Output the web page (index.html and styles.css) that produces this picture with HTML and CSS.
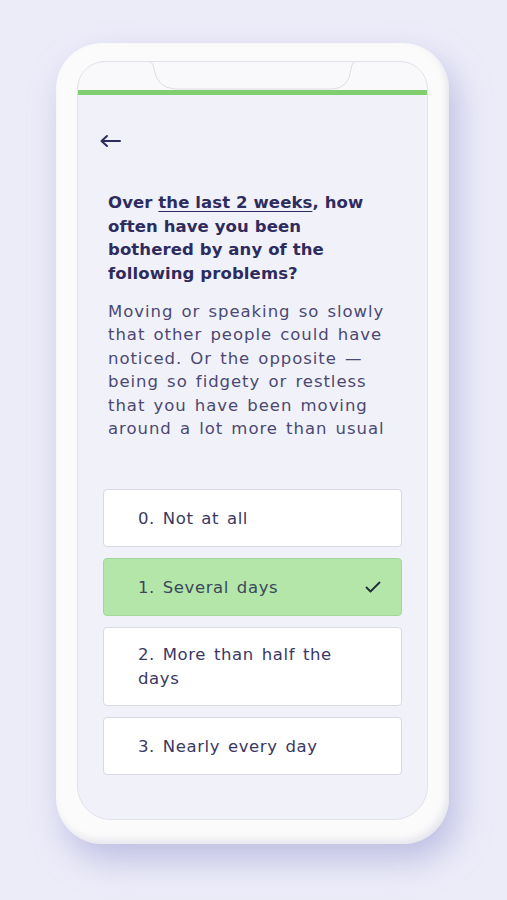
FILE: index.html
```html
<!DOCTYPE html>
<html>
<head>
<meta charset="utf-8">
<link rel="stylesheet" href="styles.css">
</head>
<body>
<div class="phone">
  <div class="screen">
    <div class="status">
      <svg class="notch" width="351" height="30" viewBox="0 0 351 30">
        <path d="M0.5 29 L0.5 28 Q2 1 28 0.5 L72 0.5 Q76 1 77 8 Q80 27 98 28 L256 28 Q272 27 274 8 Q275 1 279 0.5 L323 0.5 Q349 1 350.5 28 L350.5 29" fill="none" stroke="#dcdce4" stroke-width="1"/>
      </svg>
    </div>
    <div class="progress"></div>
    <div class="content">
      <div class="back">
        <svg width="24" height="16" viewBox="0 0 24 16"><path d="M21 8 H3 M8 3 L2.5 8 L8 13" fill="none" stroke="#2e2c5e" stroke-width="2" stroke-linecap="round" stroke-linejoin="round"/></svg>
      </div>
      <h1 class="question">Over <span class="u">the last 2 weeks</span>, how often have you been bothered by any of the following problems?</h1>
      <p class="desc">Moving or speaking so slowly that other people could have noticed. Or the opposite — being so fidgety or restless that you have been moving around a lot more than usual</p>
      <div class="options">
        <div class="option">0. Not at all</div>
        <div class="option selected"><span>1. Several days</span>
          <svg width="16" height="12" viewBox="0 0 16 12"><path d="M1.5 6.5 L5.5 10.5 L14.5 1.5" fill="none" stroke="#1f2d3a" stroke-width="1.8" stroke-linecap="round" stroke-linejoin="round"/></svg>
        </div>
        <div class="option tall">2. More than half the days</div>
        <div class="option">3. Nearly every day</div>
      </div>
    </div>
  </div>
</div>
</body>
</html>
```

FILE: styles.css
```css
html, body {
  margin: 0;
  padding: 0;
}
body {
  background: #ececf9;
  width: 507px;
  height: 900px;
  overflow: hidden;
  font-family: "DejaVu Sans", "Open Sans", sans-serif;
}
.phone {
  margin: 43px 0 0 56px;
  width: 393px;
  height: 801px;
  box-sizing: border-box;
  padding: 18px 22px 24px 21px;
  background: #fbfbfb;
  border-radius: 46px;
  box-shadow: 8px 16px 32px rgba(145, 148, 205, 0.5), inset -3px -4px 6px rgba(210, 212, 225, 0.5);
}
.screen {
  width: 351px;
  height: 759px;
  background: #f1f1f9;
  border-radius: 28px 28px 34px 34px;
  border: 1px solid #e2e2ea;
  box-sizing: border-box;
  overflow: hidden;
  display: flex;
  flex-direction: column;
}
.status {
  height: 28px;
  background: #f9f9fb;
  position: relative;
}
.notch {
  position: absolute;
  left: -1px;
  top: -1px;
}
.progress {
  height: 5px;
  background: #7fcf70;
}
.content {
  padding: 36px 0 0 30px;
}
.back {
  height: 20px;
  margin-left: -9px;
  display: flex;
  align-items: center;
}
.question {
  margin: 40px 0 0 0;
  width: 284px;
  font-size: 16.5px;
  line-height: 23.5px;
  font-weight: 600;
  color: #2e2c5e;
  letter-spacing: 0.1px;
}
.u {
  text-decoration: underline;
  text-decoration-thickness: 1px;
  text-underline-offset: 3px;
}
.desc {
  margin: 15px 0 0 0;
  width: 284px;
  font-size: 16.5px;
  line-height: 23.4px;
  color: #4b4972;
  letter-spacing: 0.95px;
  word-spacing: 2px;
}
.options {
  margin-top: 49px;
  margin-left: -5px;
  width: 299px;
  display: flex;
  flex-direction: column;
  gap: 11px;
}
.option {
  min-height: 58px;
  box-sizing: border-box;
  background: #ffffff;
  border: 1px solid #d9d9e3;
  border-radius: 4px;
  padding: 15px 32px 15px 34px;
  display: flex;
  align-items: center;
  justify-content: space-between;
  font-size: 16.5px;
  line-height: 23.5px;
  color: #3a3864;
  letter-spacing: 0.6px;
  word-spacing: 2px;
}
.option.selected {
  background: #b5e6a9;
  border-color: #a3d896;
  color: #39485a;
  padding-right: 20px;
}
.option.tall {
  padding-right: 50px;
}
```
